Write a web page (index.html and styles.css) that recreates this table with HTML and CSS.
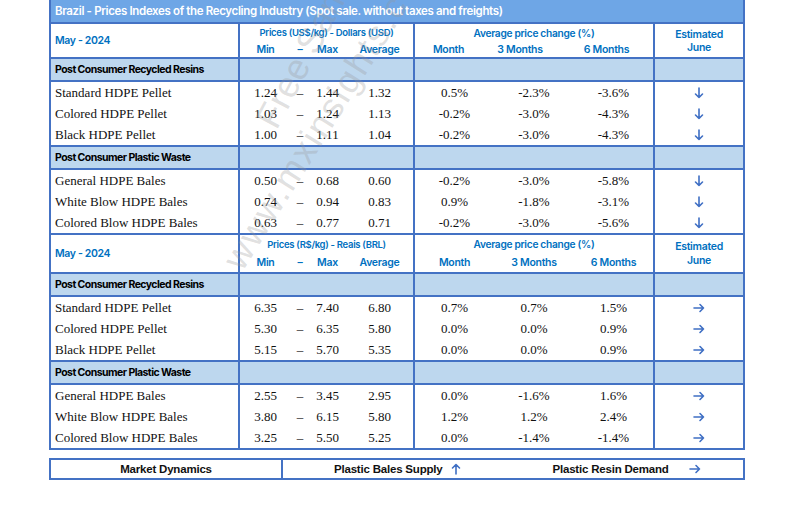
FILE: index.html
```html
<!DOCTYPE html>
<html>
<head>
<meta charset="utf-8">
<link rel="stylesheet" href="styles.css">
</head>
<body>
<div class="page">
  <div class="watermark wm1">Free Sample</div>
  <div class="watermark wm2">www.mxinsights.com</div>
  <table class="grid">
    <colgroup>
      <col class="c-name"><col class="c-min"><col class="c-dash"><col class="c-max"><col class="c-avg">
      <col class="c-m"><col class="c-3m"><col class="c-6m"><col class="c-est">
    </colgroup>
    <tr class="title"><td colspan="9">Brazil - Prices Indexes of the Recycling Industry (Spot sale. without taxes and freights)</td></tr>

    <tr class="h1"><td rowspan="2" class="lbl vl">May - 2024</td><td colspan="4" class="grp vl">Prices (US$/kg) - Dollars (USD)</td><td colspan="3" class="grp2 vl">Average price change (%)</td><td rowspan="2" class="est vl">Estimated<br>June</td></tr>
    <tr class="h2 first"><td class="vl">Min</td><td>–</td><td>Max</td><td>Average</td><td class="vl hm">Month</td><td class="h3">3 Months</td><td class="h6">6 Months</td></tr>
    <tr class="sec"><td class="vl">Post Consumer Recycled Resins</td><td colspan="4" class="vl"></td><td colspan="3" class="vl"></td><td class="vl"></td></tr>
    <tr class="row"><td class="nm vl">Standard HDPE Pellet</td><td class="vl">1.24</td><td>–</td><td>1.44</td><td>1.32</td><td class="vl">0.5%</td><td>-2.3%</td><td>-3.6%</td><td class="vl arr"><svg class="ic-down" viewBox="0 0 10 12"><path d="M5 1V10.5M1.5 7L5 10.5L8.5 7"/></svg></td></tr>
    <tr class="row"><td class="nm vl">Colored HDPE Pellet</td><td class="vl">1.03</td><td>–</td><td>1.24</td><td>1.13</td><td class="vl">-0.2%</td><td>-3.0%</td><td>-4.3%</td><td class="vl arr"><svg class="ic-down" viewBox="0 0 10 12"><path d="M5 1V10.5M1.5 7L5 10.5L8.5 7"/></svg></td></tr>
    <tr class="row last"><td class="nm vl">Black HDPE Pellet</td><td class="vl">1.00</td><td>–</td><td>1.11</td><td>1.04</td><td class="vl">-0.2%</td><td>-3.0%</td><td>-4.3%</td><td class="vl arr"><svg class="ic-down" viewBox="0 0 10 12"><path d="M5 1V10.5M1.5 7L5 10.5L8.5 7"/></svg></td></tr>
    <tr class="sec"><td class="vl">Post Consumer Plastic Waste</td><td colspan="4" class="vl"></td><td colspan="3" class="vl"></td><td class="vl"></td></tr>
    <tr class="row"><td class="nm vl">General HDPE Bales</td><td class="vl">0.50</td><td>–</td><td>0.68</td><td>0.60</td><td class="vl">-0.2%</td><td>-3.0%</td><td>-5.8%</td><td class="vl arr"><svg class="ic-down" viewBox="0 0 10 12"><path d="M5 1V10.5M1.5 7L5 10.5L8.5 7"/></svg></td></tr>
    <tr class="row"><td class="nm vl">White Blow HDPE Bales</td><td class="vl">0.74</td><td>–</td><td>0.94</td><td>0.83</td><td class="vl">0.9%</td><td>-1.8%</td><td>-3.1%</td><td class="vl arr"><svg class="ic-down" viewBox="0 0 10 12"><path d="M5 1V10.5M1.5 7L5 10.5L8.5 7"/></svg></td></tr>
    <tr class="row last"><td class="nm vl">Colored Blow HDPE Bales</td><td class="vl">0.63</td><td>–</td><td>0.77</td><td>0.71</td><td class="vl">-0.2%</td><td>-3.0%</td><td>-5.6%</td><td class="vl arr"><svg class="ic-down" viewBox="0 0 10 12"><path d="M5 1V10.5M1.5 7L5 10.5L8.5 7"/></svg></td></tr>

    <tr class="h1 b2"><td rowspan="2" class="lbl vl">May - 2024</td><td colspan="4" class="grp vl">Prices (R$/kg) - Reais (BRL)</td><td colspan="3" class="grp2 vl">Average price change (%)</td><td rowspan="2" class="est vl">Estimated<br>June</td></tr>
    <tr class="h2 b2"><td class="vl">Min</td><td>–</td><td>Max</td><td>Average</td><td class="vl">Month</td><td>3 Months</td><td>6 Months</td></tr>
    <tr class="sec"><td class="vl">Post Consumer Recycled Resins</td><td colspan="4" class="vl"></td><td colspan="3" class="vl"></td><td class="vl"></td></tr>
    <tr class="row"><td class="nm vl">Standard HDPE Pellet</td><td class="vl">6.35</td><td>–</td><td>7.40</td><td>6.80</td><td class="vl">0.7%</td><td>0.7%</td><td>1.5%</td><td class="vl arr"><svg class="ic-right" viewBox="0 0 12 10"><path d="M1 5H10.5M7 1.5L10.5 5L7 8.5"/></svg></td></tr>
    <tr class="row"><td class="nm vl">Colored HDPE Pellet</td><td class="vl">5.30</td><td>–</td><td>6.35</td><td>5.80</td><td class="vl">0.0%</td><td>0.0%</td><td>0.9%</td><td class="vl arr"><svg class="ic-right" viewBox="0 0 12 10"><path d="M1 5H10.5M7 1.5L10.5 5L7 8.5"/></svg></td></tr>
    <tr class="row last"><td class="nm vl">Black HDPE Pellet</td><td class="vl">5.15</td><td>–</td><td>5.70</td><td>5.35</td><td class="vl">0.0%</td><td>0.0%</td><td>0.9%</td><td class="vl arr"><svg class="ic-right" viewBox="0 0 12 10"><path d="M1 5H10.5M7 1.5L10.5 5L7 8.5"/></svg></td></tr>
    <tr class="sec"><td class="vl">Post Consumer Plastic Waste</td><td colspan="4" class="vl"></td><td colspan="3" class="vl"></td><td class="vl"></td></tr>
    <tr class="row"><td class="nm vl">General HDPE Bales</td><td class="vl">2.55</td><td>–</td><td>3.45</td><td>2.95</td><td class="vl">0.0%</td><td>-1.6%</td><td>1.6%</td><td class="vl arr"><svg class="ic-right" viewBox="0 0 12 10"><path d="M1 5H10.5M7 1.5L10.5 5L7 8.5"/></svg></td></tr>
    <tr class="row"><td class="nm vl">White Blow HDPE Bales</td><td class="vl">3.80</td><td>–</td><td>6.15</td><td>5.80</td><td class="vl">1.2%</td><td>1.2%</td><td>2.4%</td><td class="vl arr"><svg class="ic-right" viewBox="0 0 12 10"><path d="M1 5H10.5M7 1.5L10.5 5L7 8.5"/></svg></td></tr>
    <tr class="row last"><td class="nm vl">Colored Blow HDPE Bales</td><td class="vl">3.25</td><td>–</td><td>5.50</td><td>5.25</td><td class="vl">0.0%</td><td>-1.4%</td><td>-1.4%</td><td class="vl arr"><svg class="ic-right" viewBox="0 0 12 10"><path d="M1 5H10.5M7 1.5L10.5 5L7 8.5"/></svg></td></tr>
  </table>

  <div class="dyn">
    <div class="dyn-title">Market Dynamics</div>
    <div class="dyn-body">
      <span class="dyn-item">Plastic Bales Supply <svg class="ic-up" viewBox="0 0 10 12"><path d="M5 11V1.5M1.5 5L5 1.5L8.5 5"/></svg></span>
      <span class="dyn-item">Plastic Resin Demand <svg class="ic-right big" viewBox="0 0 12 10"><path d="M1 5H10.5M7 1.5L10.5 5L7 8.5"/></svg></span>
    </div>
  </div>
</div>
</body>
</html>
```

FILE: styles.css
```css
html, body {
  margin: 0;
  padding: 0;
  background: #ffffff;
}
.page {
  position: relative;
  width: 793px;
  height: 507px;
  padding-left: 49px;
  box-sizing: border-box;
}
.grid {
  border-collapse: collapse;
  table-layout: fixed;
  width: 694px;
  border: 2px solid #4472c4;
  border-top: none;
  font-family: "Liberation Serif", "Times New Roman", serif;
  font-size: 13px;
  color: #111;
}
.c-name { width: 189px; }
.c-min { width: 52px; }
.c-dash { width: 18px; }
.c-max { width: 37px; }
.c-avg { width: 68px; }
.c-m { width: 80px; }
.c-3m { width: 80px; }
.c-6m { width: 80px; }
.c-est { width: 90px; }

.grid td {
  padding: 0;
  text-align: center;
  white-space: nowrap;
}
.vl { border-left: 2px solid #4472c4; }

.title td {
  background: #6ea6e6;
  color: #fff;
  font-family: Inter, "Liberation Sans", sans-serif;
  font-weight: 600;
  font-size: 11.5px;
  letter-spacing: -0.35px;
  text-align: left;
  padding-left: 4px;
  height: 22px;
  border-bottom: 2px solid #4472c4;
}

.h1 td, .h2 td {
  color: #0070c0;
  font-family: Inter, "Liberation Sans", sans-serif;
  font-weight: 600;
  letter-spacing: -0.3px;
  vertical-align: middle;
}
.h1 td { height: 17px; font-size: 9.5px; }
.h2 td { height: 16px; font-size: 10.5px; }
.h1.b2 td { height: 18px; }
.h2.b2 td { height: 19px; }
.h1 .lbl {
  text-align: left;
  padding-left: 4px;
  font-size: 10.5px;
  letter-spacing: -0.35px;
}
.h1 .grp2 { font-size: 10.2px; }
.h1 .est {
  font-size: 10.5px;
  line-height: 13px;
}
.h1.b2 .est { line-height: 14px; }
.h2.first .hm { padding-right: 12px; }
.h2.first .h3 { padding-right: 28px; }
.h2.first .h6 { padding-right: 14px; }

.sec td {
  background: #bdd7ee;
  height: 21px;
  border-top: 2px solid #4472c4;
  border-bottom: 2px solid #4472c4;
  font-family: Inter, "Liberation Sans", sans-serif;
  font-weight: 700;
  font-size: 10.5px;
  letter-spacing: -0.55px;
  color: #000;
  text-align: left;
  padding-left: 4px;
}
.sec td + td { padding-left: 0; }

.row td { height: 21px; }
.row.last td { border-bottom: 2px solid #4472c4; }
.row .nm { text-align: left; padding-left: 4px; }
.arr { line-height: 0; }

svg path {
  fill: none;
  stroke: #3f6fc4;
  stroke-width: 1.6;
  stroke-linecap: round;
  stroke-linejoin: round;
}
.ic-down { width: 10px; height: 12px; vertical-align: middle; }
.ic-right { width: 12px; height: 10px; vertical-align: middle; }
.ic-up { width: 10px; height: 12px; vertical-align: -1px; margin-left: 8px; }
.ic-right.big { margin-left: 20px; vertical-align: 0; }

.dyn {
  display: flex;
  margin-top: 8px;
  width: 696px;
  height: 22px;
  box-sizing: border-box;
  border: 2px solid #4472c4;
  font-family: "Liberation Sans", Arial, sans-serif;
  font-weight: bold;
  font-size: 11.5px;
  color: #111;
}
.dyn-title {
  width: 230px;
  border-right: 2px solid #4472c4;
  display: flex;
  align-items: center;
  justify-content: center;
  letter-spacing: -0.2px;
}
.dyn-body {
  flex: 1;
  display: flex;
  align-items: center;
  padding-left: 51px;
  gap: 92px;
  letter-spacing: -0.2px;
}
.dyn-item { display: flex; align-items: center; }

.watermark {
  position: absolute;
  font-family: "Liberation Sans", Arial, sans-serif;
  color: rgba(150, 150, 150, 0.3);
  font-size: 36px;
  white-space: nowrap;
  transform-origin: left center;
  pointer-events: none;
}
.wm1 {
  left: 266px;
  top: 104px;
  transform: rotate(-62deg);
}
.wm2 {
  left: 232px;
  top: 245px;
  transform: rotate(-58deg);
  letter-spacing: 2px;
}
```
